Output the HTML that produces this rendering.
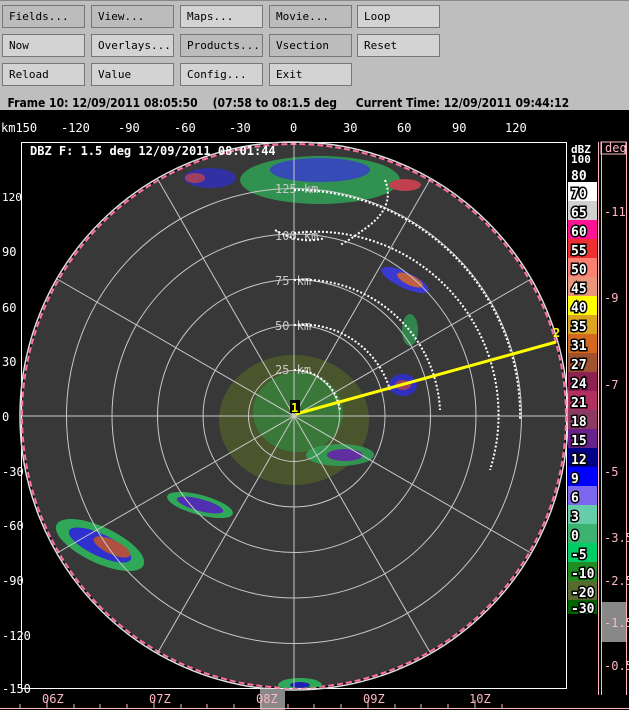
<!DOCTYPE html>
<html><head><meta charset="utf-8"><style>
body{margin:0;width:629px;height:710px;overflow:hidden;background:#000;font-family:"DejaVu Sans Mono","Liberation Mono",monospace}
#top{position:absolute;left:0;top:0;width:629px;height:110px;background:#bebebe;border-top:1px solid #888}
.b{position:absolute;width:75px;height:21px;border:1px solid #777;background:#d3d3d3;font-size:11px;line-height:21px;padding-left:6px;box-sizing:content-box;color:#000}
.d{background:#bcbcbc}
#st{position:absolute;top:95px;left:0;width:629px;font:bold 12px "DejaVu Sans Condensed","Liberation Sans",sans-serif;color:#000;white-space:pre}
svg{position:absolute;left:0;top:0}
</style></head><body>
<div id="top">
<div class="b d" style="left:2px;top:4px">Fields...</div>
<div class="b d" style="left:91px;top:4px">View...</div>
<div class="b" style="left:180px;top:4px">Maps...</div>
<div class="b d" style="left:269px;top:4px">Movie...</div>
<div class="b" style="left:357px;top:4px">Loop</div>
<div class="b" style="left:2px;top:33px">Now</div>
<div class="b" style="left:91px;top:33px">Overlays...</div>
<div class="b d" style="left:180px;top:33px">Products...</div>
<div class="b d" style="left:269px;top:33px">Vsection</div>
<div class="b" style="left:357px;top:33px">Reset</div>
<div class="b" style="left:2px;top:62px">Reload</div>
<div class="b" style="left:91px;top:62px">Value</div>
<div class="b" style="left:180px;top:62px">Config...</div>
<div class="b" style="left:269px;top:62px">Exit</div>
<div id="st">  Frame 10: 12/09/2011 08:05:50    (07:58 to 08:1.5 deg     Current Time: 12/09/2011 09:44:12</div>
</div>
<svg width="629" height="710" viewBox="0 0 629 710" style="top:0">
<defs><clipPath id="c"><circle cx="294" cy="416" r="272"/></clipPath></defs>
<rect x="0" y="110" width="629" height="600" fill="#000"/>
<g font-family="DejaVu Sans Mono,Liberation Mono,monospace" font-size="12" fill="#fff">
<text x="1" y="132">km150</text><text x="61" y="132">-120</text><text x="118" y="132">-90</text><text x="174" y="132">-60</text><text x="229" y="132">-30</text><text x="290" y="132">0</text><text x="343" y="132">30</text><text x="397" y="132">60</text><text x="452" y="132">90</text><text x="505" y="132">120</text>
<text x="2" y="201" font-size="11">120</text><text x="2" y="256">90</text><text x="2" y="312">60</text><text x="2" y="366">30</text><text x="2" y="421">0</text><text x="2" y="476">-30</text><text x="2" y="530">-60</text><text x="2" y="585">-90</text><text x="2" y="640">-120</text><text x="2" y="693">-150</text>
</g>
<rect x="21.5" y="142.5" width="545" height="546" fill="none" stroke="#fff"/>
<circle cx="294" cy="416" r="274" fill="none" stroke="#ddd" stroke-width="1.5"/>
<circle cx="294" cy="416" r="272" fill="#383838" stroke="#ff6fa0" stroke-width="2" stroke-dasharray="6 3"/>
<g clip-path="url(#c)">
<ellipse cx="294" cy="420" rx="75" ry="65" fill="#4e5a2c" opacity=".85"/>
<ellipse cx="298" cy="412" rx="45" ry="40" fill="#2f8f3f" opacity=".6"/>
<ellipse cx="320" cy="180" rx="80" ry="24" fill="#2fa858" opacity=".8"/>
<ellipse cx="320" cy="170" rx="50" ry="12" fill="#3a3ad0" opacity=".8"/>
<ellipse cx="210" cy="178" rx="26" ry="10" fill="#3030c0" opacity=".8"/>
<ellipse cx="195" cy="178" rx="10" ry="5" fill="#a04060"/>
<ellipse cx="405" cy="185" rx="16" ry="6" fill="#c04050"/>
<ellipse cx="405" cy="280" rx="26" ry="8" fill="#3a3ad0" transform="rotate(25 405 280)"/>
<ellipse cx="410" cy="280" rx="14" ry="5" fill="#c06040" transform="rotate(25 410 280)"/>
<ellipse cx="410" cy="330" rx="8" ry="16" fill="#2fa858" opacity=".7"/>
<ellipse cx="403" cy="385" rx="14" ry="11" fill="#3030c0"/>
<ellipse cx="403" cy="385" rx="8" ry="5" fill="#a04060"/>
<ellipse cx="100" cy="545" rx="48" ry="18" fill="#2fa858" transform="rotate(25 100 545)"/>
<ellipse cx="100" cy="545" rx="34" ry="11" fill="#3030d0" transform="rotate(25 100 545)"/>
<ellipse cx="112" cy="547" rx="20" ry="7" fill="#b05040" transform="rotate(25 112 547)"/>
<ellipse cx="200" cy="505" rx="34" ry="10" fill="#2fa858" transform="rotate(15 200 505)"/>
<ellipse cx="200" cy="505" rx="24" ry="6" fill="#5030b0" transform="rotate(15 200 505)"/>
<ellipse cx="340" cy="455" rx="34" ry="11" fill="#2fa858" opacity=".8"/>
<ellipse cx="345" cy="455" rx="18" ry="6" fill="#6030a0"/>
<ellipse cx="300" cy="685" rx="22" ry="7" fill="#2fa858"/>
<ellipse cx="300" cy="685" rx="10" ry="3" fill="#2020b0"/>
</g>
<g fill="none" stroke="#c8c8c8" stroke-width="1">
<circle cx="294" cy="416" r="45.5"/><circle cx="294" cy="416" r="91"/><circle cx="294" cy="416" r="136.5"/><circle cx="294" cy="416" r="182"/><circle cx="294" cy="416" r="227.5"/>
<line x1="294" y1="142" x2="294" y2="688"/><line x1="22" y1="416" x2="566" y2="416"/>
<line x1="157" y1="178" x2="431" y2="654"/><line x1="431" y1="178" x2="157" y2="654"/>
<line x1="57" y1="279" x2="531" y2="553"/><line x1="57" y1="553" x2="531" y2="279"/>
</g>
<g font-family="DejaVu Sans Mono,monospace" font-size="12" fill="#c8c8c8"><text x="275" y="374">25 km</text><text x="275" y="330">50 km</text><text x="275" y="285">75 km</text><text x="275" y="240">100 km</text><text x="275" y="193">125 km</text></g>
<g fill="none" stroke="#fff" stroke-width="2" stroke-dasharray="2 2">
<path d="M294 370 A46 46 0 0 1 340 410"/>
<path d="M294 325 A91 91 0 0 1 390 390"/>
<path d="M294 280 A137 137 0 0 1 440 410"/>
<path d="M294 233 A183 183 0 0 1 490 470"/>
<path d="M294 190 A225 225 0 0 1 520 420"/>
<path d="M385 180 Q395 205 370 225 Q350 240 340 245 M275 230 Q300 245 325 238"/>
</g>
<line x1="296" y1="414" x2="556" y2="342" stroke="#ffff00" stroke-width="3"/>
<rect x="290" y="400" width="10" height="13" fill="#000"/><text x="291" y="412" fill="#ffff00" font-size="12" font-weight="bold" font-family="DejaVu Sans Mono,monospace">1</text>
<text x="553" y="337" fill="#ffff00" font-size="12" font-weight="bold" font-family="DejaVu Sans Mono,monospace">2</text>
<text x="30" y="155" fill="#fff" font-size="12" font-weight="bold" font-family="DejaVu Sans Mono,monospace">DBZ F: 1.5 deg 12/09/2011 08:01:44</text>
<g font-family="DejaVu Sans Mono,monospace" font-size="13" font-weight="bold" fill="#fff">
<text x="571" y="153" font-size="11">dBZ</text><text x="571" y="163" font-size="11">100</text><text x="571" y="180">80</text>
<rect x="568" y="182" width="29" height="19" fill="#fff"/><rect x="568" y="201" width="29" height="19" fill="#d0d0d0"/><rect x="568" y="220" width="29" height="19" fill="#ff1493"/><rect x="568" y="239" width="29" height="19" fill="#ee3030"/><rect x="568" y="258" width="29" height="19" fill="#fa8070"/><rect x="568" y="277" width="29" height="19" fill="#e9967a"/><rect x="568" y="296" width="29" height="19" fill="#ffff00"/><rect x="568" y="315" width="29" height="19" fill="#daa520"/><rect x="568" y="334" width="29" height="19" fill="#d2691e"/><rect x="568" y="353" width="29" height="19" fill="#a0522d"/><rect x="568" y="372" width="29" height="19" fill="#8b2252"/><rect x="568" y="391" width="29" height="19" fill="#b03060"/><rect x="568" y="410" width="29" height="19" fill="#8b3a62"/><rect x="568" y="429" width="29" height="19" fill="#68228b"/><rect x="568" y="448" width="29" height="19" fill="#00008b"/><rect x="568" y="467" width="29" height="19" fill="#0000ff"/><rect x="568" y="486" width="29" height="19" fill="#7b68ee"/><rect x="568" y="505" width="29" height="19" fill="#66cdaa"/><rect x="568" y="524" width="29" height="19" fill="#3cb371"/><rect x="568" y="543" width="29" height="19" fill="#00cd66"/><rect x="568" y="562" width="29" height="19" fill="#228b22"/><rect x="568" y="581" width="29" height="19" fill="#556b2f"/><rect x="568" y="600" width="29" height="14" fill="#006400"/>
<g stroke="#000" stroke-width="3" paint-order="stroke">
<text x="571" y="198">70</text><text x="571" y="217">65</text><text x="571" y="236">60</text><text x="571" y="255">55</text><text x="571" y="274">50</text><text x="571" y="293">45</text><text x="571" y="312">40</text><text x="571" y="331">35</text><text x="571" y="350">31</text><text x="571" y="369">27</text><text x="571" y="388">24</text><text x="571" y="407">21</text><text x="571" y="426">18</text><text x="571" y="445">15</text><text x="571" y="464">12</text><text x="571" y="483">9</text><text x="571" y="502">6</text><text x="571" y="521">3</text><text x="571" y="540">0</text><text x="571" y="559">-5</text><text x="571" y="578">-10</text><text x="571" y="597">-20</text><text x="571" y="613">-30</text></g>
</g>
<g stroke="#ffb6c1" fill="none"><line x1="598.5" y1="142" x2="598.5" y2="695"/><line x1="601.5" y1="142" x2="601.5" y2="695"/><line x1="626.5" y1="142" x2="626.5" y2="695"/><rect x="601" y="142" width="25" height="12"/></g>
<rect x="602" y="602" width="24" height="40" fill="#888"/>
<g font-family="DejaVu Sans Mono,monospace" font-size="12" fill="#ffb6c1"><text x="605" y="152">deg</text><text x="604" y="216">-11</text><text x="604" y="302">-9</text><text x="604" y="389">-7</text><text x="604" y="476">-5</text><text x="604" y="542">-3.5</text><text x="604" y="585">-2.5</text><text x="604" y="627">-1.5</text><text x="604" y="670">-0.5</text>
<rect x="260" y="689" width="25" height="21" fill="#888" stroke="none"/>
<text x="42" y="703">06Z</text><text x="149" y="703">07Z</text><text x="256" y="703">08Z</text><text x="363" y="703">09Z</text><text x="469" y="703">10Z</text></g>
<line x1="0" y1="708.5" x2="629" y2="708.5" stroke="#ffb6c1"/>
<g stroke="#ffb6c1"><path d="M20 704V709M47 700V709M74 704V709M100 704V709M127 704V709M154 700V709M181 704V709M207 704V709M234 704V709M261 700V709M288 704V709M314 704V709M341 704V709M368 700V709M395 704V709M421 704V709M448 704V709M475 700V709M502 704V709"/></g>
</svg>
</body></html>
